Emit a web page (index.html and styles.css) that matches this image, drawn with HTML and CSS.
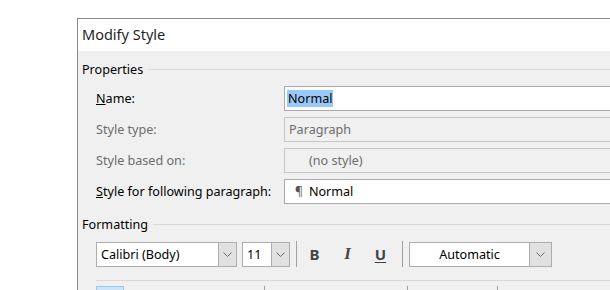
FILE: index.html
```html
<!doctype html>
<html lang="en">
    <head>
        <meta charset="UTF-8" />
        <meta name="viewport" content="width=device-width, initial-scale=1.0" />
        <title>Modify Style</title>
        <link rel="stylesheet" href="styles.css">
    </head>
    <body>
        <div class="dialog">
            <div class="title-bar">Modify Style</div>
            <div class="dialog-body">
                <div class="group-title">
                    <span>Properties</span>
                    <span class="rule"></span>
                </div>
                <div class="fields">
                    <label class="field-label"><u>N</u>ame:</label>
                    <div class="field-box"><span class="selected">Normal</span></div>

                    <label class="field-label disabled">Style type:</label>
                    <div class="field-box disabled">Paragraph</div>

                    <label class="field-label disabled">Style based on:</label>
                    <div class="field-box disabled indent">(no style)</div>

                    <label class="field-label"><u>S</u>tyle for following paragraph:</label>
                    <div class="field-box"><span class="pilcrow">¶</span>Normal</div>
                </div>

                <div class="group-title formatting">
                    <span>Formatting</span>
                    <span class="rule"></span>
                </div>
                <div class="toolbar">
                    <div class="combo font-combo">
                        <span class="combo-value">Calibri (Body)</span>
                        <span class="combo-button">
                            <svg width="9" height="5" viewBox="0 0 9 5"><path d="M0.5 0.5 L4.5 4.5 L8.5 0.5" fill="none" stroke="#6b6b6b" stroke-width="1"/></svg>
                        </span>
                    </div>
                    <div class="combo size-combo">
                        <span class="combo-value">11</span>
                        <span class="combo-button">
                            <svg width="9" height="5" viewBox="0 0 9 5"><path d="M0.5 0.5 L4.5 4.5 L8.5 0.5" fill="none" stroke="#6b6b6b" stroke-width="1"/></svg>
                        </span>
                    </div>
                    <span class="separator"></span>
                    <button class="tool-button bold">B</button>
                    <button class="tool-button italic">I</button>
                    <button class="tool-button underline">U</button>
                    <span class="separator"></span>
                    <div class="combo color-combo">
                        <span class="combo-value centered">Automatic</span>
                        <span class="combo-button">
                            <svg width="9" height="5" viewBox="0 0 9 5"><path d="M0.5 0.5 L4.5 4.5 L8.5 0.5" fill="none" stroke="#6b6b6b" stroke-width="1"/></svg>
                        </span>
                    </div>
                </div>
                <div class="toolbar-rule"></div>
                <div class="toolbar second-row">
                    <div class="align-group">
                        <span class="align-button active"></span>
                    </div>
                    <span class="separator"></span>
                    <div class="spacing-group"></div>
                    <span class="separator"></span>
                    <div class="line-group">
                        <svg width="30" height="6" viewBox="0 0 30 6">
                            <path d="M4 5 L4 1 M2 3 L4 1 L6 3" fill="none" stroke="#2b79c9" stroke-width="1"/>
                            <rect x="13" y="1" width="14" height="2" fill="#404040"/>
                        </svg>
                    </div>
                    <span class="separator"></span>
                </div>
            </div>
        </div>
    </body>
</html>
```

FILE: styles.css
```css
body {
    margin: 0;
    background-color: #ffffff;
    font-family: "Segoe UI", "Noto Sans", sans-serif;
    overflow: hidden;
    height: 290px;
}
.dialog {
    display: flex;
    flex-direction: column;
    box-sizing: border-box;
    margin: 18px 0 0 77px;
    height: 272px;
    border: 1px solid #8a8a8a;
    border-right: none;
    border-bottom: none;
    overflow: hidden;
}
.title-bar {
    flex: none;
    height: 32px;
    line-height: 30px;
    padding-left: 4px;
    background-color: #ffffff;
    color: #1f1f1f;
    font-size: 14.5px;
}
.dialog-body {
    flex: 1;
    background-color: #f0f0f0;
    padding: 9px 0 0 4px;
}
.group-title {
    display: flex;
    align-items: center;
    gap: 5px;
    height: 18px;
    font-size: 12.6px;
    color: #000000;
}
.group-title .rule {
    flex: 1;
    height: 1px;
    background-color: #d9d9d9;
}
.group-title.formatting {
    margin-top: 11px;
}
.fields {
    display: grid;
    grid-template-columns: 188px 1fr;
    grid-auto-rows: 25px;
    row-gap: 6px;
    margin-top: 8px;
    padding-left: 14px;
    font-size: 12.6px;
}
.field-label {
    display: flex;
    align-items: center;
    color: #000000;
}
.field-label.disabled {
    color: #6d6d6d;
}
.field-box {
    display: flex;
    align-items: center;
    padding-left: 2px;
    background-color: #ffffff;
    border: 1px solid #ababab;
    border-right: none;
    color: #000000;
}
.field-box.disabled {
    padding-left: 4px;
    background-color: #f0f0f0;
    border-color: #c6c6c6;
    color: #6d6d6d;
}
.field-box.indent {
    padding-left: 24px;
}
.selected {
    background-color: #99c9f9;
    padding: 0 1px;
    line-height: 17px;
}
.pilcrow {
    margin: 0 6px 0 8px;
    color: #555555;
    font-size: 12px;
}
.toolbar {
    display: flex;
    align-items: center;
    height: 26px;
    margin-top: 8px;
    padding-left: 14px;
    font-size: 12.6px;
}
.combo {
    display: flex;
    height: 25px;
    box-sizing: border-box;
    border: 1px solid #adadad;
    background-color: #ffffff;
}
.combo-value {
    flex: 1;
    display: flex;
    align-items: center;
    padding-left: 4px;
    color: #000000;
}
.combo-value.centered {
    justify-content: center;
    padding-left: 0;
}
.combo-button {
    display: flex;
    align-items: center;
    justify-content: center;
    width: 17px;
    background-color: #e1e1e1;
    border-left: 1px solid #adadad;
}
.font-combo {
    width: 141px;
}
.size-combo {
    width: 48px;
    margin-left: 5px;
}
.color-combo {
    width: 143px;
    margin-left: 6px;
}
.color-combo .combo-button {
    width: 21px;
}
.separator {
    width: 1px;
    height: 26px;
    background-color: #a0a0a0;
    margin-left: 6px;
}
.tool-button {
    width: 31px;
    height: 26px;
    margin-left: 2px;
    padding: 0;
    border: none;
    background: none;
    color: #444444;
    font-family: "Segoe UI", "Noto Sans", sans-serif;
    font-size: 15px;
    font-weight: bold;
}
.tool-button.italic {
    font-family: "Liberation Serif", serif;
    font-style: italic;
    font-size: 17px;
}
.tool-button.underline {
    text-decoration: underline;
    text-underline-offset: 2px;
}
.toolbar-rule {
    height: 1px;
    margin: 13px 0 0 14px;
    background-color: #d9d9d9;
}
.second-row {
    margin-top: 5px;
    align-items: flex-start;
}
.second-row .separator {
    margin-left: 0;
}
.align-group {
    width: 168px;
    height: 26px;
}
.align-button {
    display: block;
    width: 26px;
    height: 24px;
}
.align-button.active {
    background-color: #cce4f7;
    border: 1px solid #99c9ef;
}
.spacing-group {
    width: 142px;
}
.line-group {
    width: 89px;
    padding-left: 17px;
    box-sizing: border-box;
}
```
